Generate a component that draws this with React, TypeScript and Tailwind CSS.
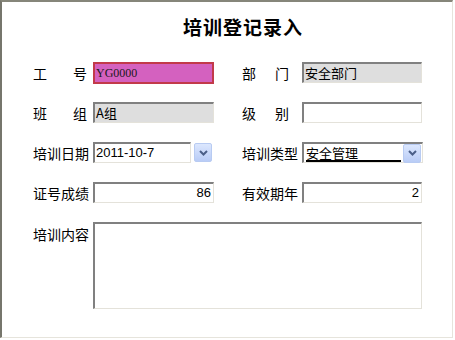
import type { ReactNode } from "react";

const sunken = "border-t-2 border-l-2 border-r border-b border-t-[#808080] border-l-[#808080] border-r-[#e4e2da] border-b-[#e4e2da]";

function Label({ text, spread, narrow }: { text: string; spread?: boolean; narrow?: boolean }) {
  if (spread) {
    return (
      <div className="w-[55px] shrink-0">
        <div className={`${narrow ? "w-[47px]" : "w-[54px]"} flex justify-between text-[14px] leading-[20px] text-black`}>
          {text.split("").map((c, i) => (
            <span key={i}>{c}</span>
          ))}
        </div>
      </div>
    );
  }
  return <div className="w-[55px] shrink-0 whitespace-nowrap text-[14px] leading-[20px] text-black">{text}</div>;
}

function DropButton() {
  return (
    <div className="w-[18px] h-[19px] shrink-0 rounded-[2px] border border-[#b8cbf2] bg-gradient-to-b from-[#dce7fe] to-[#b9ccf6] flex items-center justify-center">
      <svg width="9" height="6" viewBox="0 0 9 6">
        <path d="M1 1 L4.5 4.5 L8 1" fill="none" stroke="#4b5f88" strokeWidth="2" />
      </svg>
    </div>
  );
}

function Field({ children }: { children: ReactNode }) {
  return <div className="flex items-center h-[21px] gap-[5px]">{children}</div>;
}

export default function App() {
  return (
    <div className="w-[455px] h-[340px] bg-white" style={{ fontFamily: '"Noto Sans CJK SC", "Liberation Sans", sans-serif' }}>
      <div className="w-[453px] h-[338px] border-t-2 border-l-2 border-r border-b border-t-[#86867a] border-l-[#76766c] border-r-[#e6e4dc] border-b-[#e6e4dc] bg-white">
        <div className="pl-[181px] pt-[12px] h-[60px] text-[19px] font-bold leading-[26px] tracking-[1px] text-black">培训登记录入</div>

        <div className="pl-[31px] grid grid-cols-[182px_181px] gap-x-[27px] gap-y-[19px]">
          <Field>
            <Label text="工号" spread />
            <div className="w-[121px] h-[22px] border-2 border-[#c23a4a] bg-[#d461bf] px-[1px] text-[12px] leading-[18px] text-[#1a1a1a]" style={{ fontFamily: '"Liberation Serif", serif' }}>
              YG0000
            </div>
          </Field>
          <Field>
            <Label text="部门" spread narrow />
            <div className={`w-[120px] h-[21px] ${sunken} bg-[#dedede] px-[1px] text-[13px] leading-[17px] text-black`}>安全部门</div>
          </Field>

          <Field>
            <Label text="班组" spread />
            <div className={`w-[121px] h-[21px] ${sunken} bg-[#dedede] px-[1px] text-[13px] leading-[17px] text-black`}>A组</div>
          </Field>
          <Field>
            <Label text="级别" spread narrow />
            <div className={`w-[120px] h-[21px] ${sunken} bg-white`} />
          </Field>

          <Field>
            <Label text="培训日期" />
            <div className="flex items-center gap-[3px]">
              <div className={`w-[98px] h-[21px] ${sunken} bg-white px-[1px] text-[13px] leading-[17px] text-black`} style={{ fontFamily: '"Liberation Sans", sans-serif' }}>
                2011-10-7
              </div>
              <DropButton />
            </div>
          </Field>
          <Field>
            <Label text="培训类型" />
            <div className={`w-[121px] h-[21px] ${sunken} bg-white flex items-center pl-[2px] pr-[1px] gap-[2px]`}>
              <div className="flex-1 h-[17px] border-b-2 border-black text-[13px] leading-[15px] text-black">安全管理</div>
              <DropButton />
            </div>
          </Field>

          <Field>
            <Label text="证号成绩" />
            <div className={`w-[121px] h-[21px] ${sunken} bg-white px-[2px] text-right text-[13px] leading-[17px] text-black`} style={{ fontFamily: '"Liberation Sans", sans-serif' }}>
              86
            </div>
          </Field>
          <Field>
            <Label text="有效期年" />
            <div className={`w-[120px] h-[21px] ${sunken} bg-white px-[2px] text-right text-[13px] leading-[17px] text-black`} style={{ fontFamily: '"Liberation Sans", sans-serif' }}>
              2
            </div>
          </Field>
        </div>

        <div className="pl-[31px] pt-[19px] flex gap-[5px]">
          <div className="pt-[2px]">
            <Label text="培训内容" />
          </div>
          <div className={`w-[329px] h-[87px] ${sunken} bg-white`} />
        </div>
      </div>
    </div>
  );
}
